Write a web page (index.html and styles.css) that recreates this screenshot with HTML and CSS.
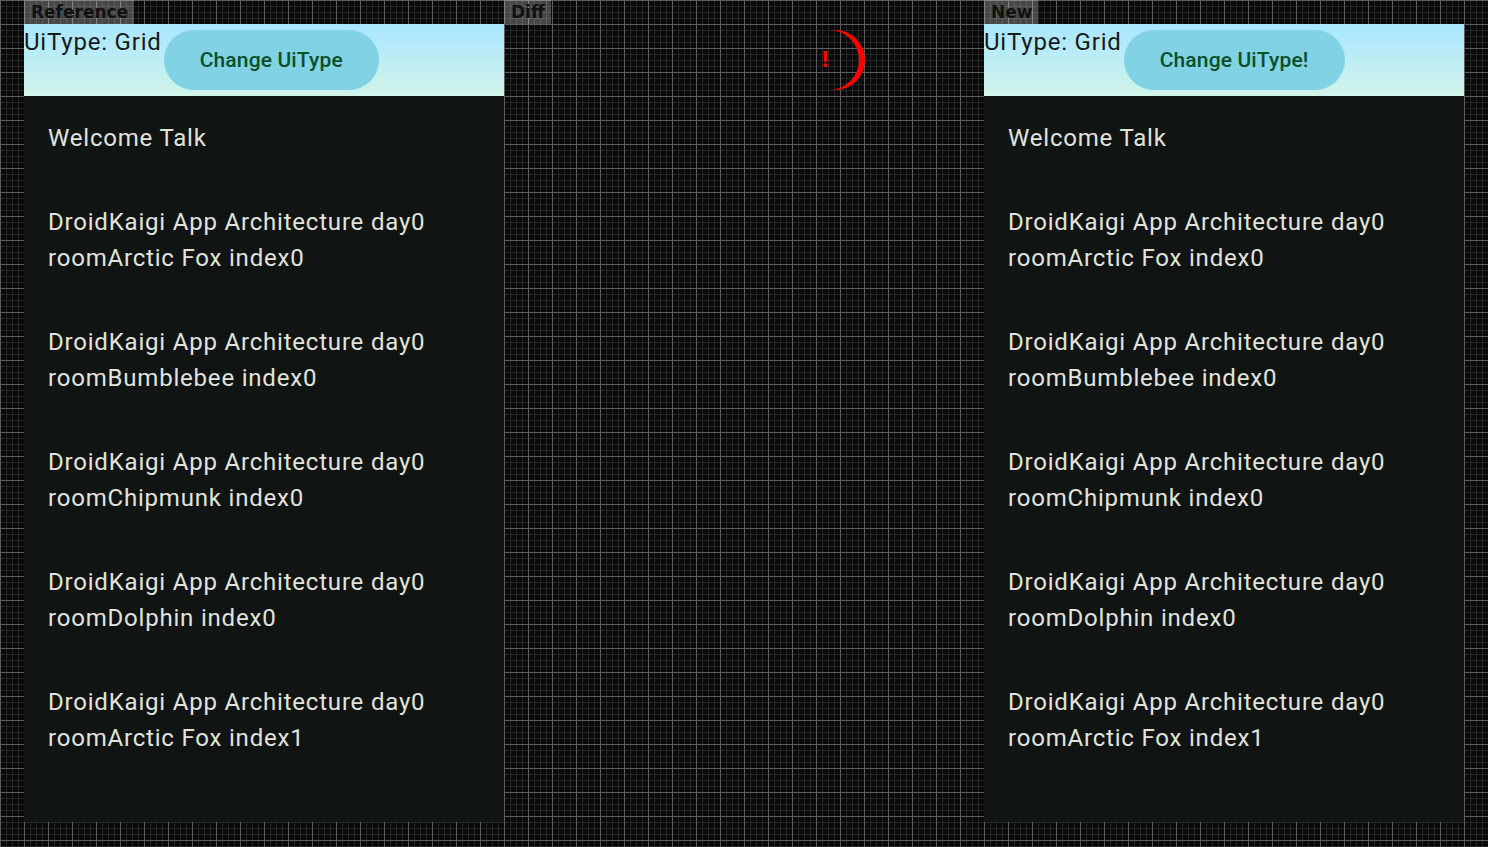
FILE: index.html
```html
<!DOCTYPE html>
<html>
<head>
<meta charset="utf-8">
<link rel="stylesheet" href="styles.css">
</head>
<body>
<div class="stage">
  <section class="column">
    <div class="label">Reference</div>
    <div class="panel">
      <header class="bar">
        <span class="uitype">UiType: Grid</span>
        <button class="btn">Change UiType</button>
      </header>
      <ul class="list">
        <li>Welcome Talk</li>
        <li>DroidKaigi App Architecture day0<br>roomArctic Fox index0</li>
        <li>DroidKaigi App Architecture day0<br>roomBumblebee index0</li>
        <li>DroidKaigi App Architecture day0<br>roomChipmunk index0</li>
        <li>DroidKaigi App Architecture day0<br>roomDolphin index0</li>
        <li>DroidKaigi App Architecture day0<br>roomArctic Fox index1</li>
      </ul>
    </div>
  </section>
  <section class="column">
    <div class="label">Diff</div>
    <div class="diff">
      <svg class="diff-svg" width="480" height="798" viewBox="0 0 480 798">
        <path d="M325,6 L331,6 A30,30 0 0 1 331,66 L325,66 A30,30 0 0 0 325,6 Z" fill="#ff0000"/>
        <text x="318" y="43" class="bang">!</text>
      </svg>
    </div>
  </section>
  <section class="column">
    <div class="label">New</div>
    <div class="panel">
      <header class="bar">
        <span class="uitype">UiType: Grid</span>
        <button class="btn">Change UiType!</button>
      </header>
      <ul class="list">
        <li>Welcome Talk</li>
        <li>DroidKaigi App Architecture day0<br>roomArctic Fox index0</li>
        <li>DroidKaigi App Architecture day0<br>roomBumblebee index0</li>
        <li>DroidKaigi App Architecture day0<br>roomChipmunk index0</li>
        <li>DroidKaigi App Architecture day0<br>roomDolphin index0</li>
        <li>DroidKaigi App Architecture day0<br>roomArctic Fox index1</li>
      </ul>
    </div>
  </section>
</div>
</body>
</html>
```

FILE: styles.css
```css
html, body {
  margin: 0;
  padding: 0;
}
body {
  width: 1488px;
  height: 847px;
  overflow: hidden;
  background-color: #0a0a0a;
  background-image:
    linear-gradient(to right, #5c5c5c 1px, transparent 1px),
    linear-gradient(to bottom, #5c5c5c 1px, transparent 1px),
    linear-gradient(to right, #262626 1px, transparent 1px),
    linear-gradient(to bottom, #262626 1px, transparent 1px);
  background-size: 24px 24px, 24px 24px, 6px 6px, 6px 6px;
  font-family: Roboto, "Noto Sans", sans-serif;
}
.stage {
  display: flex;
  padding-left: 24px;
}
.column {
  width: 480px;
  display: flex;
  flex-direction: column;
  align-items: flex-start;
}
.label {
  height: 24px;
  line-height: 24px;
  padding: 0 6px 0 7px;
  background: rgba(255, 255, 255, 0.25);
  color: #111111;
  font-family: "DejaVu Sans", sans-serif;
  font-weight: bold;
  font-size: 17px;
}
.panel {
  width: 480px;
  height: 798px;
  background: #101412;
  display: flex;
  flex-direction: column;
}
.bar {
  height: 72px;
  display: flex;
  align-items: flex-start;
  background: linear-gradient(to bottom, #a8e6fe, #d2f4ea);
}
.uitype {
  font-size: 24px;
  line-height: 36px;
  letter-spacing: 0.8px;
  color: #161a18;
}
.btn {
  margin: 6px 0 0 2px;
  height: 60px;
  padding: 0 36px;
  border: none;
  border-radius: 30px;
  background: #80d2e4;
  color: #0b4f28;
  font-family: Roboto, sans-serif;
  font-weight: 500;
  font-size: 21px;
  letter-spacing: 0.15px;
}
.list {
  list-style: none;
  margin: 0;
  padding: 0 24px;
}
.list li {
  padding: 24px 0;
  font-size: 24px;
  line-height: 36px;
  letter-spacing: 0.8px;
  color: #e2e3de;
}
.diff {
  width: 480px;
  height: 798px;
}
.diff-svg {
  display: block;
}
.bang {
  font-family: Roboto, sans-serif;
  font-weight: 900;
  font-size: 22px;
  fill: #ff0000;
}
```
